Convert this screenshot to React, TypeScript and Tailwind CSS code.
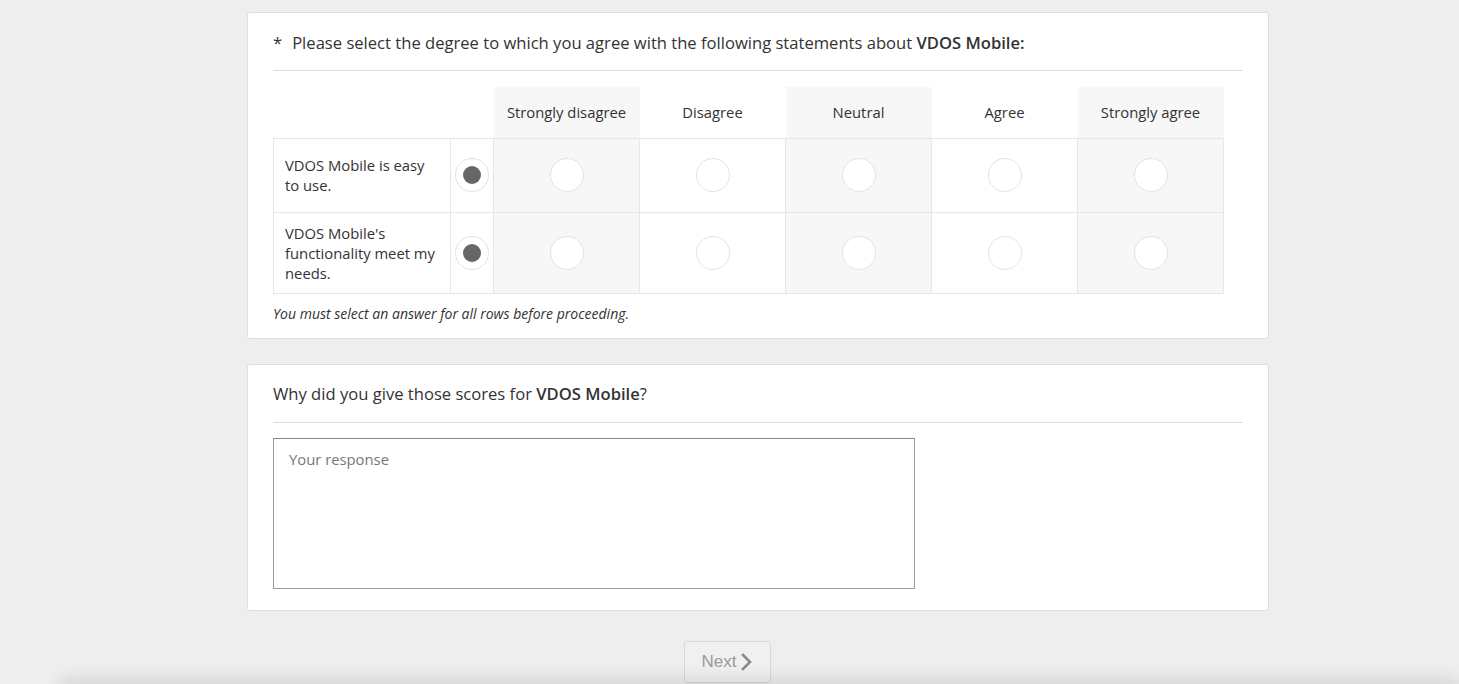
import React from 'react';

const options = ['Strongly disagree', 'Disagree', 'Neutral', 'Agree', 'Strongly agree'];

const statements = [
  { text: 'VDOS Mobile is easy to use.', height: 'h-[74px]' },
  { text: "VDOS Mobile's functionality meet my needs.", height: 'h-[81px]' },
];

const Radio: React.FC<{ checked?: boolean }> = ({ checked }) => (
  <span className="mx-auto flex h-[34px] w-[34px] items-center justify-center rounded-full border border-[#e3e3e3] bg-white">
    {checked && <span className="h-[18px] w-[18px] rounded-full bg-[#666666]" />}
  </span>
);

const App: React.FC = () => {
  return (
    <div
      className="relative h-[684px] overflow-hidden bg-[#eeeeee] text-[#333333]"
      style={{ fontFamily: '"Open Sans", "Noto Sans", sans-serif' }}
    >
      <div className="ml-[247px] w-[1022px] pt-[12px]">
        {/* matrix question */}
        <div className="rounded-[3px] border border-[#dcdbe6] bg-white px-[25px] pt-[19px] pb-[16px]">
          <div className="border-b border-[#dcdbe6] pb-[16px] text-[16.6px] leading-[22px]">
            <span className="mr-[10px]">*</span>
            Please select the degree to which you agree with the following statements about{' '}
            <b className="font-semibold">VDOS Mobile:</b>
          </div>

          <table className="mt-[16px] border-collapse text-[14.8px] leading-[20px]">
            <thead>
              <tr className="h-[51px]">
                <th className="w-[177px] p-0" />
                <th className="w-[43px] p-0" />
                {options.map((o, i) => (
                  <th
                    key={o}
                    className={`w-[146px] p-0 text-center font-normal ${i % 2 === 0 ? 'bg-[#f7f7f7]' : 'bg-white'}`}
                  >
                    {o}
                  </th>
                ))}
              </tr>
            </thead>
            <tbody>
              {statements.map((s) => (
                <tr key={s.text} className={s.height}>
                  <td className="border border-[#e6e6e6] px-[11px] align-middle">{s.text}</td>
                  <td className="border border-[#e6e6e6] p-0 align-middle">
                    <Radio checked />
                  </td>
                  {options.map((o, i) => (
                    <td
                      key={o}
                      className={`border border-[#e6e6e6] p-0 align-middle ${i % 2 === 0 ? 'bg-[#f7f7f7]' : 'bg-white'}`}
                    >
                      <Radio />
                    </td>
                  ))}
                </tr>
              ))}
            </tbody>
          </table>

          <p className="mt-[11px] text-[14px] italic leading-[17px]">
            You must select an answer for all rows before proceeding.
          </p>
        </div>

        {/* open question */}
        <div className="mt-[25px] rounded-[3px] border border-[#dcdbe6] bg-white px-[25px] pt-[18px] pb-[21px]">
          <div className="border-b border-[#dcdbe6] pb-[17px] text-[16.6px] leading-[22px]">
            Why did you give those scores for <b className="font-semibold">VDOS Mobile</b>?
          </div>
          <textarea
            placeholder="Your response"
            className="mt-[15px] block h-[151px] w-[642px] resize-none border border-[#9a9a9a] border-t-[#868686] px-[15px] pt-[10px] text-[14.8px] leading-[20px] outline-none placeholder:text-[#777777]"
          />
        </div>
      </div>

      <div className="mt-[30px] flex justify-center pr-[4px]">
        <button
          className="flex h-[42px] w-[87px] items-center justify-center gap-[4px] rounded-[3px] border border-[#d8d8d8] bg-[#f0f0f0] pt-[1px] text-[17px] text-[#9a9a9a]"
          style={{ fontFamily: '"Liberation Sans", Arial, sans-serif' }}
        >
          Next
          <svg width="13" height="18" viewBox="0 0 13 18" fill="none">
            <path d="M3 2l7 7-7 7" stroke="#8a8a8a" strokeWidth="2.6" strokeLinecap="square" />
          </svg>
        </button>
      </div>

      <div className="pointer-events-none absolute bottom-[-22px] left-[60px] right-0 h-[22px] shadow-[0_-4px_18px_rgba(0,0,0,0.12)]" />
    </div>
  );
};

export default App;
